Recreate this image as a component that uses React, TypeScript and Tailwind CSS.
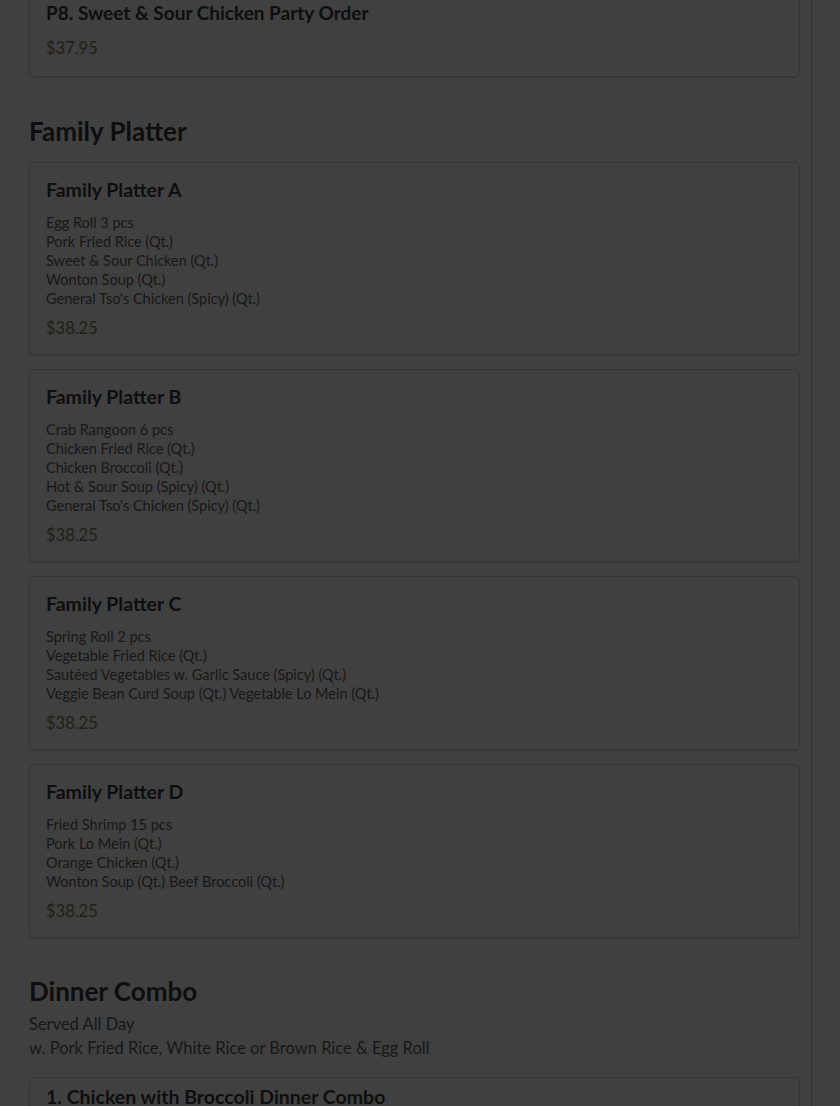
import React from "react";

type Item = { title: string; lines: string[]; price: string };

const platters: Item[] = [
  {
    title: "Family Platter A",
    lines: [
      "Egg Roll 3 pcs",
      "Pork Fried Rice (Qt.)",
      "Sweet & Sour Chicken (Qt.)",
      "Wonton Soup (Qt.)",
      "General Tso's Chicken (Spicy) (Qt.)",
    ],
    price: "$38.25",
  },
  {
    title: "Family Platter B",
    lines: [
      "Crab Rangoon 6 pcs",
      "Chicken Fried Rice (Qt.)",
      "Chicken Broccoli (Qt.)",
      "Hot & Sour Soup (Spicy) (Qt.)",
      "General Tso's Chicken (Spicy) (Qt.)",
    ],
    price: "$38.25",
  },
  {
    title: "Family Platter C",
    lines: [
      "Spring Roll 2 pcs",
      "Vegetable Fried Rice (Qt.)",
      "Sautéed Vegetables w. Garlic Sauce (Spicy) (Qt.)",
      "Veggie Bean Curd Soup (Qt.) Vegetable Lo Mein (Qt.)",
    ],
    price: "$38.25",
  },
  {
    title: "Family Platter D",
    lines: [
      "Fried Shrimp 15 pcs",
      "Pork Lo Mein (Qt.)",
      "Orange Chicken (Qt.)",
      "Wonton Soup (Qt.) Beef Broccoli (Qt.)",
    ],
    price: "$38.25",
  },
];

function Card({ item }: { item: Item }) {
  return (
    <div className="rounded-[5px] border border-[#353535] px-4 pt-[17px] pb-[14px] shadow-[0_1px_1px_rgba(0,0,0,0.15)]">
      <div className="text-[19.5px] leading-[20px] font-bold text-[#0e0e0e]">{item.title}</div>
      <div className="mt-[13px] text-[14.5px] leading-[19px] text-[#171717]">
        {item.lines.map((l, i) => (
          <div key={i}>{l}</div>
        ))}
      </div>
      <div className="mt-2 text-[16.5px] leading-[24px] text-[#1f1f17]">{item.price}</div>
    </div>
  );
}

export default function App() {
  return (
    <div
      className="min-h-screen h-[1106px] overflow-hidden bg-[#404040] flex"
      style={{ fontFamily: "Lato, 'Noto Sans', sans-serif" }}
    >
      <div className="w-[812px] shrink-0 border-r border-[#2f2f2f] pl-[29px] pr-[11px]">
        <div className="-mt-[14px] rounded-[5px] border border-[#353535] px-4 pt-4 pb-4 shadow-[0_1px_1px_rgba(0,0,0,0.15)]">
          <div className="text-[19px] leading-[20px] font-bold text-[#0e0e0e]">
            P8. Sweet &amp; Sour Chicken Party Order
          </div>
          <div className="mt-[13px] text-[16.5px] leading-[24px] text-[#1f1f17]">$37.95</div>
        </div>

        <h2 className="mt-[39px] text-[26px] leading-[30px] font-bold text-[#0e0e0e]">Family Platter</h2>
        <div className="mt-4 flex flex-col gap-[14px]">
          {platters.map((p) => (
            <Card key={p.title} item={p} />
          ))}
        </div>

        <h2 className="mt-[38px] text-[26px] leading-[30px] font-bold text-[#0e0e0e]">Dinner Combo</h2>
        <div className="mt-[6px] text-[16.5px] leading-[24px] text-[#171717]">
          <div>Served All Day</div>
          <div>w. Pork Fried Rice, White Rice or Brown Rice &amp; Egg Roll</div>
        </div>
        <div className="mt-[17px] rounded-[5px] border border-[#353535] px-4 pt-[9px] pb-4">
          <div className="text-[19.5px] leading-[20px] font-bold text-[#0e0e0e]">
            1. Chicken with Broccoli Dinner Combo
          </div>
          <div className="mt-2 text-[16.5px] leading-[24px] text-[#1f1f17]">$11.95</div>
        </div>
      </div>
      <div className="flex-1" />
    </div>
  );
}
